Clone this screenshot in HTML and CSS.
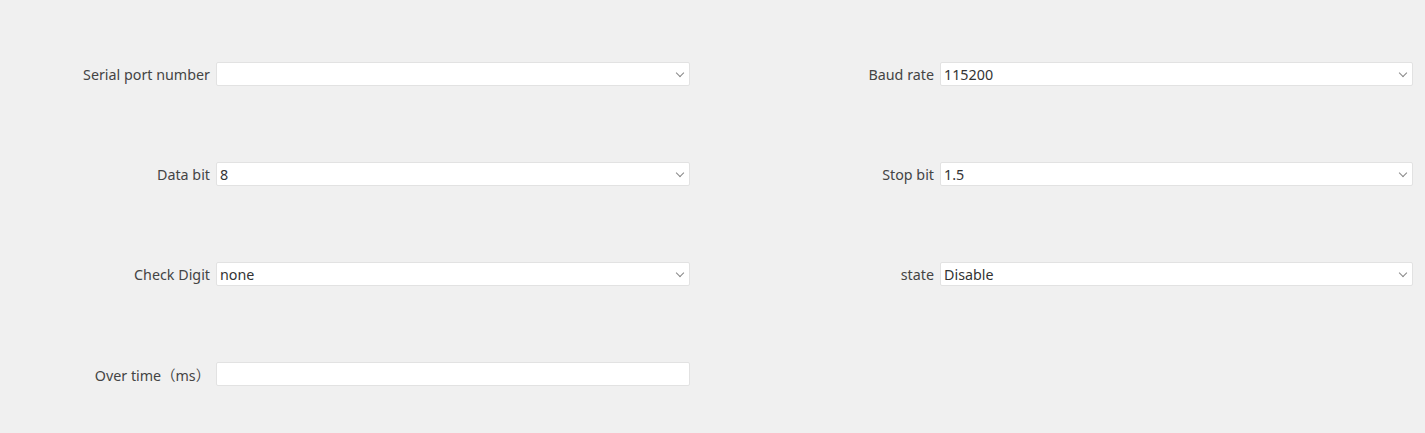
FILE: index.html
```html
<!DOCTYPE html>
<html>
<head>
<meta charset="utf-8">
<link rel="stylesheet" href="styles.css">
</head>
<body>
<div class="form">
  <label class="lbl">Serial port number</label>
  <div class="field select"><span class="val"></span><span class="chev"></span></div>
  <label class="lbl">Baud rate</label>
  <div class="field select"><span class="val">115200</span><span class="chev"></span></div>

  <label class="lbl">Data bit</label>
  <div class="field select"><span class="val">8</span><span class="chev"></span></div>
  <label class="lbl">Stop bit</label>
  <div class="field select"><span class="val">1.5</span><span class="chev"></span></div>

  <label class="lbl">Check Digit</label>
  <div class="field select"><span class="val">none</span><span class="chev"></span></div>
  <label class="lbl">state</label>
  <div class="field select"><span class="val">Disable</span><span class="chev"></span></div>

  <label class="lbl">Over time（ms）</label>
  <div class="field"><span class="val"></span></div>
</div>
</body>
</html>
```
FILE: styles.css
```css
html, body {
  margin: 0;
  padding: 0;
  background: #f0f0f0;
  height: 100%;
}
body {
  font-family: "Noto Sans", "Noto Sans CJK SC", sans-serif;
  font-size: 14.3px;
  color: #333;
}
.form {
  display: grid;
  grid-template-columns: 216px 474px 250px 473px;
  grid-auto-rows: 24px;
  row-gap: 76px;
  padding-top: 62px;
}
.lbl {
  display: flex;
  align-items: center;
  justify-content: flex-end;
  padding-right: 6px;
  color: #444;
  white-space: nowrap;
}
.field {
  box-sizing: border-box;
  background: #fff;
  border: 1px solid #e2e2e2;
  border-radius: 2px;
  display: flex;
  align-items: center;
  justify-content: space-between;
  padding: 0 6px 0 3px;
}
.val {
  color: #333;
}
.chev {
  width: 5px;
  height: 5px;
  border-right: 1px solid #888;
  border-bottom: 1px solid #888;
  transform: rotate(45deg);
  margin-top: -3px;
  margin-right: 0;
}
```
